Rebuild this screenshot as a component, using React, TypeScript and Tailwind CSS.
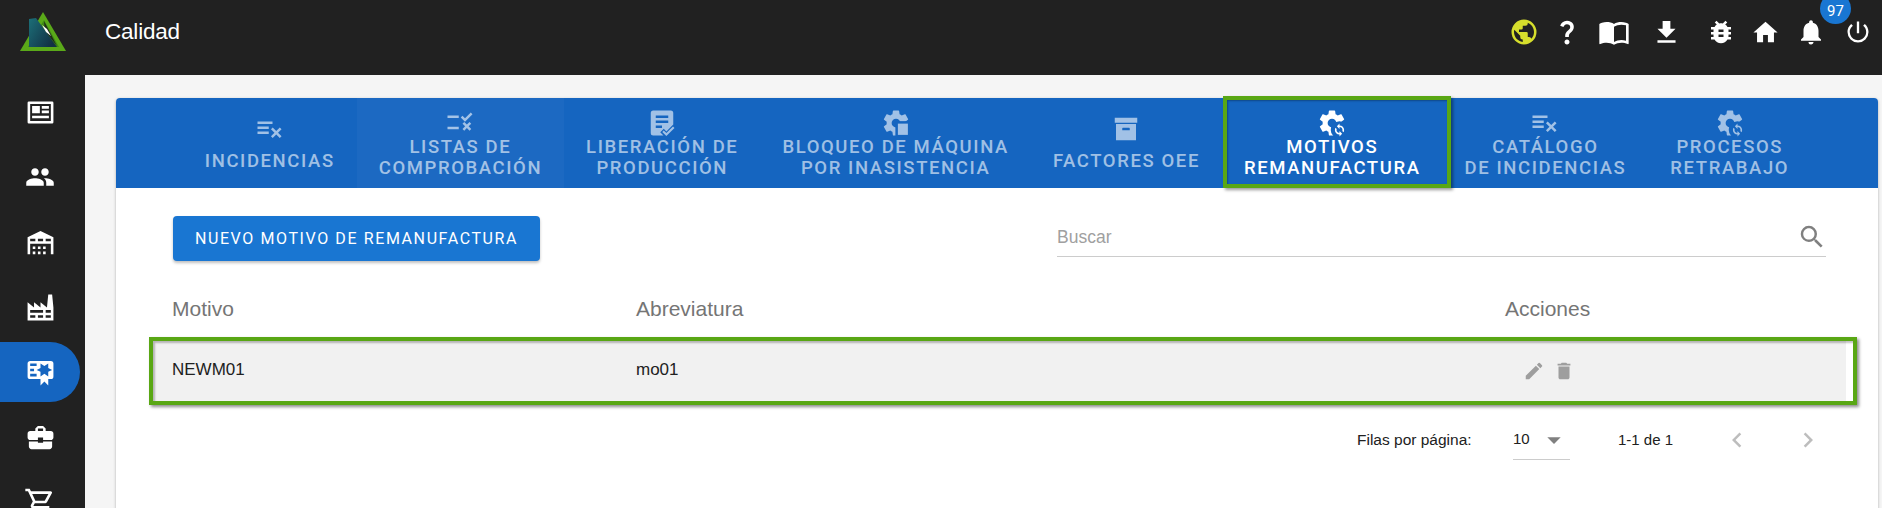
import type { ReactNode } from "react";
import {
  MdArrowDropDown,
  MdBugReport,
  MdBusinessCenter,
  MdChevronLeft,
  MdChevronRight,
  MdDelete,
  MdEdit,
  MdFileDownload,
  MdHome,
  MdNotifications,
  MdOutlineShoppingCart,
  MdPeople,
  MdPowerSettingsNew,
  MdQuestionMark,
  MdSearch,
} from "react-icons/md";

const COG =
  "M12,15.5A3.5,3.5 0 0,1 8.5,12A3.5,3.5 0 0,1 12,8.5A3.5,3.5 0 0,1 15.5,12A3.5,3.5 0 0,1 12,15.5M19.43,12.97C19.47,12.65 19.5,12.33 19.5,12C19.5,11.67 19.47,11.34 19.43,11L21.54,9.37C21.73,9.22 21.78,8.95 21.66,8.73L19.66,5.27C19.54,5.05 19.27,4.96 19.05,5.05L16.56,6.05C16.04,5.66 15.5,5.32 14.87,5.07L14.5,2.42C14.46,2.18 14.25,2 14,2H10C9.75,2 9.54,2.18 9.5,2.42L9.13,5.07C8.5,5.32 7.96,5.66 7.44,6.05L4.95,5.05C4.73,4.96 4.46,5.05 4.34,5.27L2.34,8.73C2.21,8.95 2.27,9.22 2.46,9.37L4.57,11C4.53,11.34 4.5,11.67 4.5,12C4.5,12.33 4.53,12.65 4.57,12.97L2.46,14.63C2.27,14.78 2.21,15.05 2.34,15.27L4.34,18.73C4.46,18.95 4.73,19.03 4.95,18.95L7.44,17.94C7.96,18.34 8.5,18.68 9.13,18.93L9.5,21.58C9.54,21.82 9.75,22 10,22H14C14.25,22 14.46,21.82 14.5,21.58L14.87,18.93C15.5,18.67 16.04,18.34 16.56,17.94L19.05,18.95C19.27,19.03 19.54,18.95 19.66,18.73L21.66,15.27C21.78,15.05 21.73,14.78 21.54,14.63L19.43,12.97Z";

function Glyph({ className, children }: { className?: string; children: ReactNode }) {
  return (
    <svg viewBox="0 0 24 24" fill="currentColor" className={className}>
      {children}
    </svg>
  );
}

const tabIcon = "w-[30px] h-[30px] -my-[1px]";

const PlaylistRemove = () => (
  <Glyph className={tabIcon}>
    <path d="M2,6V8H14V6H2M2,10V12H11V10H2M14.17,10.76L12.76,12.17L15.59,15L12.76,17.83L14.17,19.24L17,16.41L19.83,19.24L21.24,17.83L18.41,15L21.24,12.17L19.83,10.76L17,13.59L14.17,10.76M2,14V16H11V14H2Z" />
  </Glyph>
);

const CheckRemove = () => (
  <Glyph className={tabIcon}>
    <path d="M2,6H11V8H2V6M2,15H11V17H2V15M16,11L12.6,7.6L14,6.2L16,8.2L20.6,3.6L22,5L16,11M14,12.5L15.4,11.1L17.5,13.2L19.6,11.1L21,12.5L18.9,14.6L21,16.7L19.6,18.1L17.5,16L15.4,18.1L14,16.7L16.1,14.6L14,12.5Z" />
  </Glyph>
);

const TextBoxCheck = () => (
  <Glyph className="w-[30px] h-[30px] -my-[1px]">
    <path d="M5,2H19A2,2 0 0,1 21,4V13.2L15.5,18.7L13.4,16.6L10.6,19.4L13.2,22H5A2,2 0 0,1 3,20V4A2,2 0 0,1 5,2M7,6V8H17V6H7M7,10V12H17V10H7M7,14V16H12V14H7Z" />
    <path d="M15.5,22.4L12.2,19.1L13.4,17.9L15.5,20L20.8,14.7L22,15.9Z" />
  </Glyph>
);

const CogStop = () => (
  <Glyph className={tabIcon}>
    <path d={COG} />
    <rect x="11.5" y="10.5" width="12.5" height="13.5" fill="#1565c0" />
    <rect x="13.5" y="12.5" width="8" height="9" />
  </Glyph>
);

const CogRefresh = () => (
  <Glyph className={tabIcon}>
    <path d={COG} />
    <circle cx="18" cy="17.5" r="7" fill="#1565c0" />
    <path d="M18,12.3V13.9C20.1,13.9 21.7,15.5 21.7,17.5C21.7,18.2 21.5,18.8 21.2,19.3L20.2,18.3C20.3,18.1 20.4,17.8 20.4,17.5C20.4,16.2 19.3,15.2 18,15.2V16.7L15.9,14.5L18,12.3M18,22.7V21.1C15.9,21.1 14.3,19.5 14.3,17.5C14.3,16.8 14.5,16.2 14.8,15.7L15.8,16.7C15.7,16.9 15.6,17.2 15.6,17.5C15.6,18.8 16.7,19.8 18,19.8V18.3L20.1,20.5L18,22.7Z" />
  </Glyph>
);

const Archive = () => (
  <Glyph className={tabIcon}>
    <path d="M3,3H21V7H3V3M4,8H20V21H4V8M9.5,11A0.5,0.5 0 0,0 9,11.5V13H15V11.5A0.5,0.5 0 0,0 14.5,11H9.5Z" />
  </Glyph>
);

const tabs = [
  { icon: <PlaylistRemove />, lines: ["Incidencias"] },
  { icon: <CheckRemove />, lines: ["Listas de", "comprobación"], hover: true },
  { icon: <TextBoxCheck />, lines: ["Liberación de", "producción"] },
  { icon: <CogStop />, lines: ["Bloqueo de máquina", "por inasistencia"] },
  { icon: <Archive />, lines: ["Factores OEE"] },
  { icon: <CogRefresh />, lines: ["Motivos", "Remanufactura"], active: true },
  { icon: <PlaylistRemove />, lines: ["Catálogo", "de incidencias"] },
  { icon: <CogRefresh />, lines: ["Procesos", "retrabajo"] },
];

function Logo() {
  return (
    <svg viewBox="0 0 46 42" className="w-[46px] h-[42px]">
      <defs>
        <linearGradient id="logoFill" x1="0" y1="0" x2="1" y2="0.6">
          <stop offset="0" stopColor="#1c6f78" />
          <stop offset="1" stopColor="#123044" />
        </linearGradient>
      </defs>
      <polygon points="23,1 46,40 0,40" fill="#5aa919" />
      <polygon points="24,9 39,36 8,36" fill="#3f8a14" />
      <polygon points="24,10 37,35 25,20" fill="#1e2a1a" />
      <polygon points="9,8 16,7 37,36 9,36" fill="url(#logoFill)" />
      <polygon points="22,14 27,18 31,25 26,21" fill="#fff" />
    </svg>
  );
}

function Sidebar() {
  const cell = "h-[60px] shrink-0 flex items-center justify-center pr-[5px]";
  const icon = "w-[31px] h-[31px]";
  return (
    <nav className="w-[85px] shrink-0 bg-[#212121] text-white flex flex-col gap-[5px] pt-[7px] overflow-hidden">
      <div className={cell}>
        <Glyph className={icon}>
          <path fillRule="evenodd" d="M3,3.5H21A1,1 0 0,1 22,4.5V19.5A1,1 0 0,1 21,20.5H3A1,1 0 0,1 2,19.5V4.5A1,1 0 0,1 3,3.5M4,5.5V18.5H20V5.5H4M5.5,7H11.5V12.5H5.5V7M13,7H18.5V9H13V7M13,10.5H18.5V12.5H13V10.5M5.5,14.5H18.5V16.5H5.5V14.5Z" />
        </Glyph>
      </div>
      <div className={cell}>
        <MdPeople className="w-[30px] h-[30px]" />
      </div>
      <div className={cell}>
        <Glyph className={icon}>
          <path d="M6,19H8V21H6V19M12,3L2,8V21H4V13H20V21H22V8L12,3M8,11H4V9H8V11M14,11H10V9H14V11M20,11H16V9H20V11M10,15H12V17H10V15M14,15H16V17H14V15M6,15H8V17H6V15M10,19H12V21H10V19M14,19H16V21H14V19Z" />
        </Glyph>
      </div>
      <div className={cell}>
        <Glyph className={icon}>
          <path d="M4,18V20H8V18H4M4,14V16H14V14H4M10,18V20H14V18H10M16,14V16H20V14H16M16,18V20H20V18H16M2,22V8L7,12V8L12,12V8L17,12L18,2H21L22,12V22H2Z" />
        </Glyph>
      </div>
      <div className="h-[60px] w-[80px] shrink-0 rounded-r-[30px] bg-[#1565c0] flex items-center justify-center">
        <Glyph className={icon}>
          <path d="M4,3C2.89,3 2,3.89 2,5V15A2,2 0 0,0 4,17H12V22L15,19L18,22V17H20A2,2 0 0,0 22,15V8L22,6V5A2,2 0 0,0 20,3H16V3H4M12,5L15,7L18,5V8.5L21,10L18,11.5V15L15,13L12,15V11.5L9,10L12,8.5V5M4,5H9V7H4V5M4,9H7V11H4V9M4,13H9V15H4V13Z" />
        </Glyph>
      </div>
      <div className={cell}>
        <MdBusinessCenter className={icon} />
      </div>
      <div className={cell}>
        <MdOutlineShoppingCart className="w-[32px] h-[32px]" />
      </div>
    </nav>
  );
}

function TopBar() {
  return (
    <header className="h-[75px] shrink-0 bg-[#212121] text-white flex items-start">
      <div className="w-[85px] shrink-0 flex justify-center pt-[11px]">
        <Logo />
      </div>
      <div className="font-['Liberation_Sans',sans-serif] text-[22.5px] tracking-[-0.2px] pl-[20px] pt-[15px]">Calidad</div>
      <div className="ml-auto flex items-center pt-[16px] pr-[10px]">
        <Glyph className="w-[30px] h-[30px] text-[#d6de2c]">
          <path
            fillRule="evenodd"
            d="M17.9,17.39C17.64,16.59 16.89,16 16,16H15V13A1,1 0 0,0 14,12H8V10H10A1,1 0 0,0 11,9V7H13A2,2 0 0,0 15,5V4.59C17.93,5.77 20,8.64 20,12C20,14.08 19.2,15.97 17.9,17.39M11,19.93C7.05,19.44 4,16.08 4,12C4,11.38 4.08,10.78 4.21,10.21L9,15V16A2,2 0 0,0 11,18M12,2A10,10 0 0,0 2,12A10,10 0 0,0 12,22A10,10 0 0,0 22,12A10,10 0 0,0 12,2Z"
          />
        </Glyph>
        <MdQuestionMark className="w-[30px] h-[30px] ml-[13px]" />
        <Glyph className="w-[32px] h-[32px] ml-[16px]">
          <path d="M12,21.5C10.65,20.65 8.2,20 6.5,20C4.85,20 3.15,20.3 1.75,21.05C1.65,21.1 1.6,21.1 1.5,21.1C1.25,21.1 1,20.85 1,20.6V6C1.6,5.55 2.25,5.25 3,5C4.11,4.65 5.33,4.5 6.5,4.5C8.45,4.5 10.55,4.9 12,6C13.45,4.9 15.55,4.5 17.5,4.5C18.67,4.5 19.89,4.65 21,5C21.75,5.25 22.4,5.55 23,6V20.6C23,20.85 22.75,21.1 22.5,21.1C22.4,21.1 22.35,21.1 22.25,21.05C20.85,20.3 19.15,20 17.5,20C15.8,20 13.35,20.65 12,21.5M12,8V19.5C13.35,18.65 15.8,18 17.5,18C18.7,18 19.9,18.15 21,18.5V7C19.9,6.65 18.7,6.5 17.5,6.5C15.8,6.5 13.35,7.15 12,8Z" />
        </Glyph>
        <MdFileDownload className="w-[31px] h-[31px] ml-[21px]" />
        <MdBugReport className="w-[30px] h-[30px] ml-[24px]" />
        <MdHome className="w-[29px] h-[29px] ml-[15px]" />
        <div className="relative ml-[16px]">
          <MdNotifications className="w-[30px] h-[30px]" />
          <span className="absolute -top-[24px] left-[24px] w-[31px] h-[31px] pt-[6px] rounded-full bg-[#1976d2] text-[15px] flex items-center justify-center">
            97
          </span>
        </div>
        <MdPowerSettingsNew className="w-[28px] h-[28px] ml-[18px]" />
      </div>
    </header>
  );
}

function TabBar() {
  return (
    <div className="h-[90px] bg-[#1565c0] rounded-t-[4px] flex justify-center">
      {tabs.map((tab) => (
        <div
          key={tab.lines[0]}
          className={`relative flex flex-col items-center justify-center px-[22px] pt-[1px] text-[18.5px] leading-[21px] font-medium tracking-[1.6px] uppercase text-center ${
            tab.active ? "text-white" : "text-white/60"
          } ${tab.hover ? "bg-white/[0.03]" : ""} ${tab.lines.length === 1 ? "gap-[8px]" : ""}`}
        >
          {tab.icon}
          <div>
            {tab.lines.map((line) => (
              <div key={line} className="whitespace-nowrap">
                {line}
              </div>
            ))}
          </div>
          {tab.active && (
            <span className="absolute -top-[2px] bottom-0 left-[1px] right-[-8px] border-4 border-[#59a714] shadow-[2px_2px_3px_rgba(0,0,0,0.4),inset_1px_1px_2px_rgba(0,0,0,0.3)]" />
          )}
        </div>
      ))}
    </div>
  );
}

export default function App() {
  return (
    <div className="h-[508px] w-[1882px] overflow-hidden flex flex-col font-['Roboto',sans-serif]">
      <TopBar />
      <div className="flex-1 min-h-0 flex">
        <Sidebar />
        <main className="flex-1 bg-[#f5f5f5] pl-[31px] pr-[4px] pt-[23px] min-w-0 overflow-hidden">
          <section className="bg-white rounded-t-[4px] h-[500px] shadow-[0_1px_3px_rgba(0,0,0,0.3)]">
            <TabBar />

            <div className="flex items-start justify-between pl-[57px] pr-[52px] pt-[28px]">
              <button className="h-[45px] w-[367px] rounded-[4px] bg-[#1976d2] text-white text-[16px] font-normal tracking-[1.6px] uppercase shadow-[0_2px_3px_rgba(0,0,0,0.25)]">
                Nuevo motivo de remanufactura
              </button>
              <div className="w-[769px] h-[41px] border-b border-[#cccccc] flex items-center justify-between pt-[2px] text-[#a0a0a0] text-[17.5px] font-['Liberation_Sans',sans-serif]">
                <span>Buscar</span>
                <MdSearch className="w-[30px] h-[30px] text-[#808080] -mr-[1px]" />
              </div>
            </div>

            <div className="pl-[33px] pr-[21px] pt-[28px] font-['Liberation_Sans',sans-serif]">
              <div className="flex h-[40px] mb-[8px] items-center text-[21px] text-[#757575] pl-[23px]">
                <span className="w-[464px]">Motivo</span>
                <span className="w-[869px]">Abreviatura</span>
                <span>Acciones</span>
              </div>
              <div className="h-[68px] border-4 border-[#59a714] bg-[linear-gradient(to_right,#f1f1f1_calc(100%-7px),#fff_calc(100%-7px))] flex items-center pl-[19px] text-[17px] text-[#212121] shadow-[2px_2px_3px_rgba(0,0,0,0.45),inset_2px_2px_2px_rgba(0,0,0,0.25)]">
                <span className="w-[464px] pb-[2px]">NEWM01</span>
                <span className="w-[887px] pb-[2px]">mo01</span>
                <span className="flex items-center gap-[8px] text-[#9e9e9e]">
                  <MdEdit className="w-[22px] h-[22px]" />
                  <MdDelete className="w-[22px] h-[22px]" />
                </span>
              </div>
              <div className="flex items-center h-[48px] mt-[11px] text-[15px] text-[#212121]">
                <span className="ml-[1208px] w-[156px] text-[15.5px]">Filas por página:</span>
                <span className="relative w-[57px] h-[40px] border-b border-[#cccccc] flex items-center">
                  10
                  <MdArrowDropDown className="absolute right-[0px] w-[32px] h-[32px] text-[#808080]" />
                </span>
                <span className="ml-[48px] w-[104px]">1-1 de 1</span>
                <MdChevronLeft className="w-[30px] h-[30px] text-[#bdbdbd]" />
                <MdChevronRight className="w-[30px] h-[30px] text-[#bdbdbd] ml-[41px]" />
              </div>
            </div>
          </section>
        </main>
      </div>
    </div>
  );
}
